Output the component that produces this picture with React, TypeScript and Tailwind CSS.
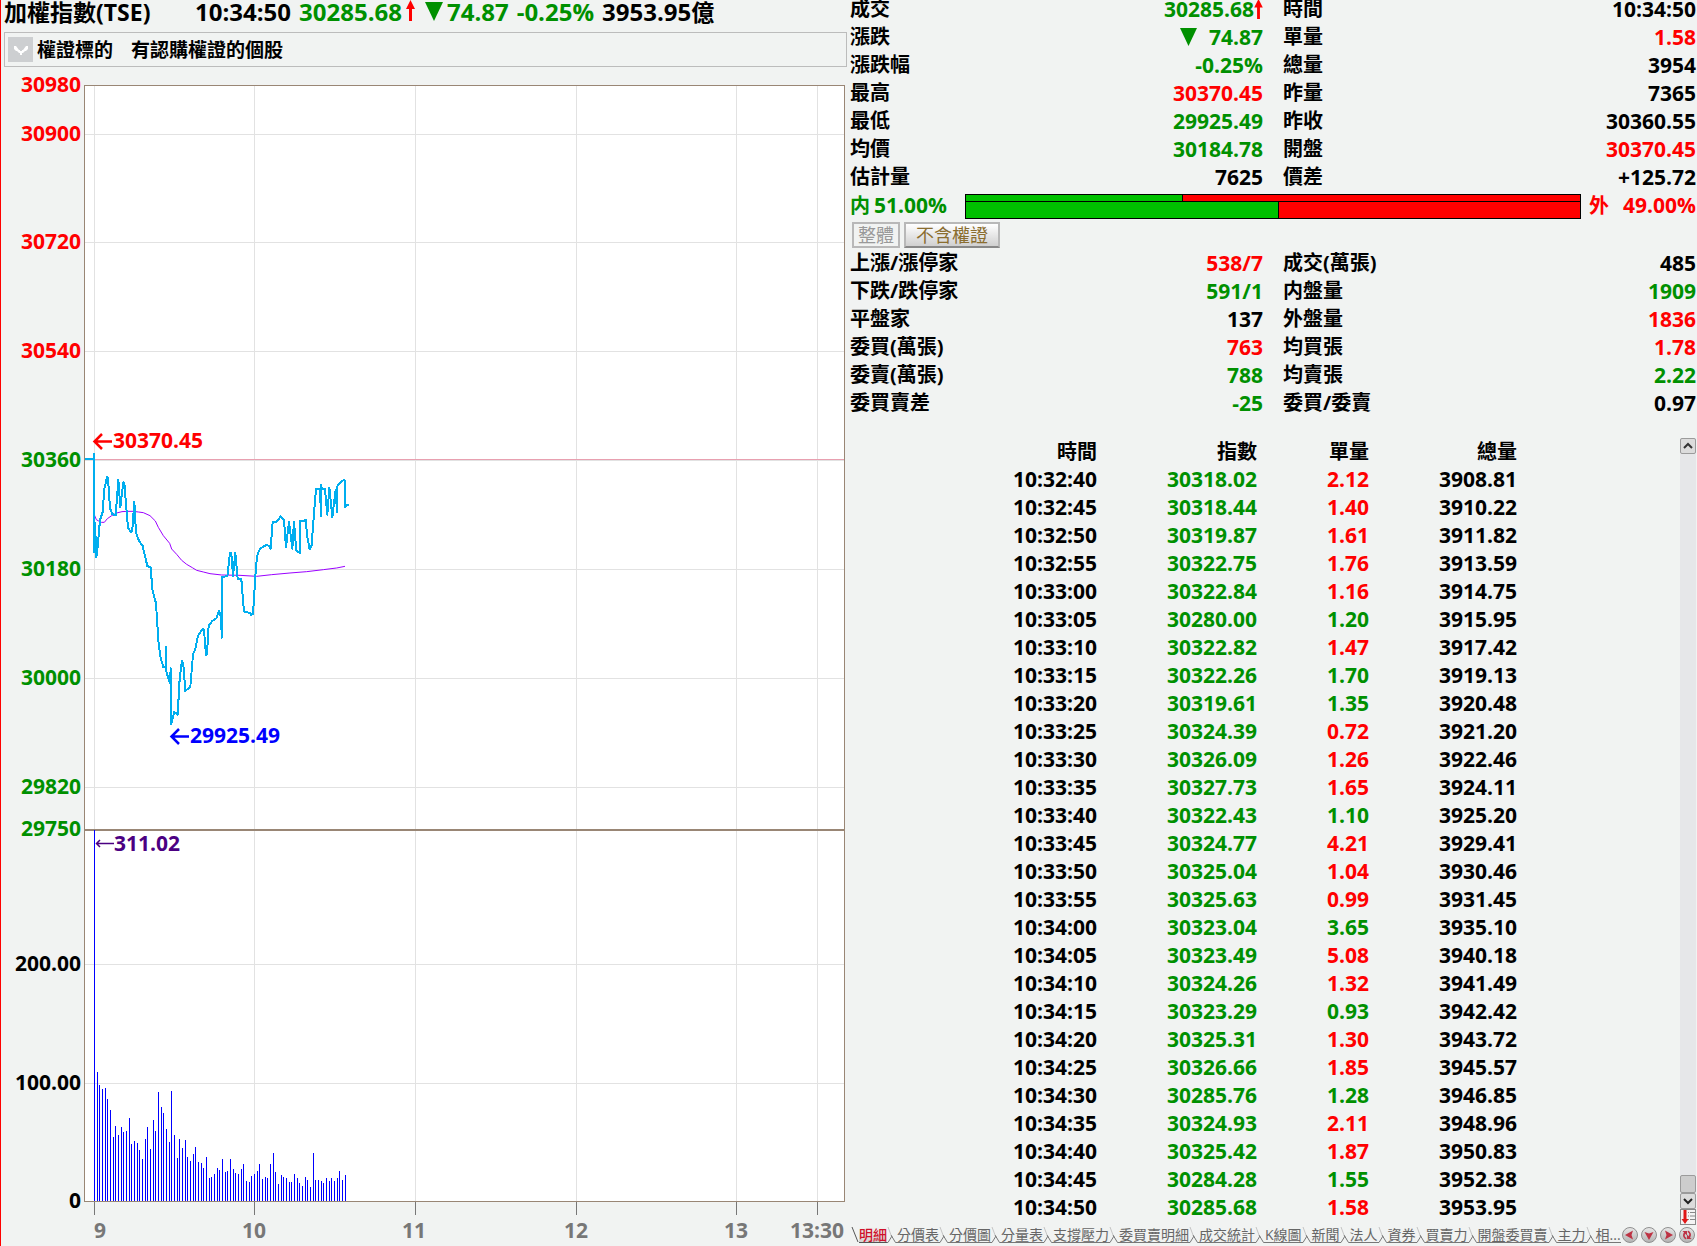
import React from "react";

type Tone = "red" | "green" | "black";

const toneClass: Record<Tone, string> = {
  red: "text-[#ff0000]",
  green: "text-[#009000]",
  black: "text-black",
};

type Stat = { label: string; value: string; tone: Tone; mark?: "up" | "down" };

const quoteStats: Stat[] = [
  { label: "成交", value: "30285.68", tone: "green", mark: "up" },
  { label: "時間", value: "10:34:50", tone: "black" },
  { label: "漲跌", value: "74.87", tone: "green", mark: "down" },
  { label: "單量", value: "1.58", tone: "red" },
  { label: "漲跌幅", value: "-0.25%", tone: "green" },
  { label: "總量", value: "3954", tone: "black" },
  { label: "最高", value: "30370.45", tone: "red" },
  { label: "昨量", value: "7365", tone: "black" },
  { label: "最低", value: "29925.49", tone: "green" },
  { label: "昨收", value: "30360.55", tone: "black" },
  { label: "均價", value: "30184.78", tone: "green" },
  { label: "開盤", value: "30370.45", tone: "red" },
  { label: "估計量", value: "7625", tone: "black" },
  { label: "價差", value: "+125.72", tone: "black" },
];

const marketStats: Stat[] = [
  { label: "上漲/漲停家", value: "538/7", tone: "red" },
  { label: "成交(萬張)", value: "485", tone: "black" },
  { label: "下跌/跌停家", value: "591/1", tone: "green" },
  { label: "内盤量", value: "1909", tone: "green" },
  { label: "平盤家", value: "137", tone: "black" },
  { label: "外盤量", value: "1836", tone: "red" },
  { label: "委買(萬張)", value: "763", tone: "red" },
  { label: "均買張", value: "1.78", tone: "red" },
  { label: "委賣(萬張)", value: "788", tone: "green" },
  { label: "均賣張", value: "2.22", tone: "green" },
  { label: "委買賣差", value: "-25", tone: "green" },
  { label: "委買/委賣", value: "0.97", tone: "black" },
];

// time, index, single volume, tone of the single volume, total volume
const ticks: [string, string, string, Tone, string][] = [
  ["10:32:40", "30318.02", "2.12", "red", "3908.81"],
  ["10:32:45", "30318.44", "1.40", "red", "3910.22"],
  ["10:32:50", "30319.87", "1.61", "red", "3911.82"],
  ["10:32:55", "30322.75", "1.76", "red", "3913.59"],
  ["10:33:00", "30322.84", "1.16", "red", "3914.75"],
  ["10:33:05", "30280.00", "1.20", "green", "3915.95"],
  ["10:33:10", "30322.82", "1.47", "red", "3917.42"],
  ["10:33:15", "30322.26", "1.70", "green", "3919.13"],
  ["10:33:20", "30319.61", "1.35", "green", "3920.48"],
  ["10:33:25", "30324.39", "0.72", "red", "3921.20"],
  ["10:33:30", "30326.09", "1.26", "red", "3922.46"],
  ["10:33:35", "30327.73", "1.65", "red", "3924.11"],
  ["10:33:40", "30322.43", "1.10", "green", "3925.20"],
  ["10:33:45", "30324.77", "4.21", "red", "3929.41"],
  ["10:33:50", "30325.04", "1.04", "red", "3930.46"],
  ["10:33:55", "30325.63", "0.99", "red", "3931.45"],
  ["10:34:00", "30323.04", "3.65", "green", "3935.10"],
  ["10:34:05", "30323.49", "5.08", "red", "3940.18"],
  ["10:34:10", "30324.26", "1.32", "red", "3941.49"],
  ["10:34:15", "30323.29", "0.93", "green", "3942.42"],
  ["10:34:20", "30325.31", "1.30", "red", "3943.72"],
  ["10:34:25", "30326.66", "1.85", "red", "3945.57"],
  ["10:34:30", "30285.76", "1.28", "green", "3946.85"],
  ["10:34:35", "30324.93", "2.11", "red", "3948.96"],
  ["10:34:40", "30325.42", "1.87", "red", "3950.83"],
  ["10:34:45", "30284.28", "1.55", "green", "3952.38"],
  ["10:34:50", "30285.68", "1.58", "red", "3953.95"],
];

const tabs = ["明細", "分價表", "分價圖", "分量表", "支撐壓力", "委買賣明細", "成交統計", "K線圖", "新聞", "法人", "資券", "買賣力", "開盤委買賣", "主力", "相..."];

// one bar per minute from 09:00
const volumes = [
  371, 129, 116, 112, 113, 102, 91, 64, 75, 66, 74, 69, 70, 83, 57, 60, 58, 51, 42, 62, 74, 52, 81, 70, 109, 94, 88, 72, 59, 110, 66, 43, 62, 53, 61, 44, 40, 47, 54, 39, 38, 33, 44, 23, 24, 27, 33, 31,
  42, 29, 30, 42, 32, 28, 27, 32, 37, 20, 19, 25, 27, 30, 37, 22, 24, 23, 37, 48, 29, 17, 26, 24, 23, 19, 19, 27, 23, 18, 15, 24, 21, 14, 48, 21, 21, 20, 18, 23, 20, 23, 20, 23, 30, 21, 26,
];

const priceLabels: [string, number, string][] = [
  ["30980", 85, "#ff0000"],
  ["30900", 134, "#ff0000"],
  ["30720", 242, "#ff0000"],
  ["30540", 351, "#ff0000"],
  ["30360", 460, "#009000"],
  ["30180", 569, "#009000"],
  ["30000", 678, "#009000"],
  ["29820", 787, "#009000"],
  ["29750", 829, "#009000"],
  ["200.00", 964, "#000000"],
  ["100.00", 1083, "#000000"],
  ["0", 1201, "#000000"],
];

const hourLabels: [string, number, number][] = [
  ["9", 94, 100],
  ["10", 254, 254],
  ["11", 415, 414],
  ["12", 576, 576],
  ["13", 736, 736],
  ["13:30", 817, 817],
];

const priceLine =
  "44,117 72,117 72,102 72,397 75,310 79,411 83,380 90,300 98,276 103,206 108,186 111,170 114,174 120,265 127,282 137,286 145,180 151,262 160,187 163,190 174,324 183,336 187,330 193,245 198,338 207,363 218,378 232,438 242,442 247,508 258,550 265,660 271,709 280,742 287,742 288,680 289,755 300,790 302,745 303,913 313,876 323,884 329,777 336,722 340,735 346,813 361,800 369,704 376,686 384,647 398,627 402,630 408,706 411,700 416,616 427,603 440,594 447,572 452,590 456,653 457,470 472,469 480,398 484,400 489,468 496,398 503,476 514,478 522,575 540,579 544,585 549,582 556,470 561,408 570,386 587,376 598,377 602,387 608,305 619,307 632,289 642,300 648,382 657,305 667,386 672,305 679,392 690,400 690,302 700,304 707,300 712,350 719,388 725,375 732,280 738,207 750,207 753,290 753,195 756,207 765,207 772,284 778,203 787,291 797,210 801,277 801,200 810,188 822,179 825,182 825,262 829,255 836,255";

const averageLine =
  "72,282 79,299 86,303 94,307 103,307 112,296 125,287 140,279 156,275 170,274 190,274 205,276 220,278 240,287 256,303 265,322 280,347 299,370 305,387 320,403 335,421 350,433 367,443 380,451 400,456 420,461 455,465 510,466 560,469 605,464 660,459 710,455 760,449 800,444 825,439";

function UpArrow({ className }: { className: string }) {
  return (
    <svg className={className} viewBox="0 0 9 21" aria-hidden>
      <path d="M4.500 0 9 9H6v12H3V9H0z" fill="#ff0000" />
    </svg>
  );
}

function DownTriangle({ className }: { className: string }) {
  return (
    <svg className={className} viewBox="0 0 18 19" aria-hidden>
      <path d="M0 0h18L9 19z" fill="#009000" />
    </svg>
  );
}

function TrendChart() {
  return (
    <svg className="block h-auto w-full" viewBox="0 0 846 1179" role="img" aria-label="加權指數走勢圖" fontSize="21" fontWeight="700">
      <g transform="translate(-1 -67)">
        <rect x="84.500" y="85.500" width="760" height="1116" fill="#fff" />
        <g stroke="#e2e2e2" shapeRendering="crispEdges">
          {hourLabels.map(([t, x]) => (
            <line key={t} x1={x + 0.5} x2={x + 0.5} y1="86" y2="1201" />
          ))}
          {[134, 242, 351, 460, 569, 678, 787, 964, 1083].map((y) => (
            <line key={y} x1="85" x2="844" y1={y + 0.5} y2={y + 0.5} />
          ))}
        </g>
        <line x1="85" x2="844" y1="459.500" y2="459.500" stroke="#e8a0b0" />
        <line x1="84" x2="845" y1="830" y2="830" stroke="#998675" strokeWidth="2" />
        <rect x="84.500" y="85.500" width="760" height="1116" fill="none" stroke="#998675" />

        <g stroke="#0000ff" shapeRendering="crispEdges">
          {volumes.map((v, i) => {
            const x = 94.5 + Math.round((i * 8) / 3);
            return <line key={i} x1={x} x2={x} y1={1201 - v} y2="1201" />;
          })}
        </g>
        <g transform="translate(70 420) scale(0.33333)" fill="none" strokeLinejoin="round" shapeRendering="crispEdges">
          <polyline points={averageLine} stroke="#9a00ff" strokeWidth="3" />
          <polyline points={priceLine} stroke="#00aeef" strokeWidth="6" />
        </g>

        <g textAnchor="end">
          {priceLabels.map(([t, y, c]) => (
            <text key={t} x="81" y={y + 7} fill={c}>
              {t}
            </text>
          ))}
        </g>
        <g textAnchor="middle" fill="#777777">
          {hourLabels.map(([t, x, lx]) => (
            <g key={t}>
              <line x1={x + 0.5} x2={x + 0.5} y1="1202" y2="1215" stroke="#777777" />
              <text x={lx} y="1238">
                {t}
              </text>
            </g>
          ))}
        </g>

        <path d="M102 434l-7.500 7.500 7.500 7.500M95 441.500h17" fill="none" stroke="#ff0000" strokeWidth="2.500" />
        <text x="113" y="448" fill="#ff0000">
          30370.45
        </text>
        <path d="M179 729l-7.500 7.500 7.500 7.500M172 736.500h17" fill="none" stroke="#0000ff" strokeWidth="2.500" />
        <text x="190" y="743" fill="#0000ff">
          29925.49
        </text>
        <path d="M100 840l-3.500 3.500 3.500 3.500M97 843.500h17" fill="none" stroke="#4b0082" strokeWidth="1.500" />
        <text x="114" y="851" fill="#4b0082">
          311.02
        </text>
      </g>
    </svg>
  );
}

function StatGrid({ stats }: { stats: Stat[] }) {
  return (
    <dl className="grid grid-cols-2 gap-x-5 text-[20px] leading-7">
      {stats.map((s) => (
        <div key={s.label} className="flex items-center justify-between whitespace-nowrap">
          <dt>{s.label}</dt>
          <dd className={`flex items-center text-[21px] ${toneClass[s.tone]}`}>
            {s.mark === "down" && <DownTriangle className="mr-3 h-[18px] w-[17px]" />}
            {s.value}
            {s.mark === "up" && <UpArrow className="h-5 w-[9px]" />}
          </dd>
        </div>
      ))}
    </dl>
  );
}

function RatioBar() {
  return (
    <div className="mt-px flex h-7 items-center gap-2 whitespace-nowrap text-[20px]">
      <div className="flex w-[107px] items-center gap-1 text-[#009000]">
        <span>内</span>
        <span className="text-[21px]">51.00%</span>
      </div>
      <div className="flex h-[25px] flex-1 flex-col border border-black">
        <div className="box-content flex h-1.5 border-b border-black">
          <div className="w-[35.4%] border-r border-black bg-[#00c000]" />
          <div className="flex-1 bg-[#ff0000]" />
        </div>
        <div className="flex flex-1">
          <div className="w-[51%] border-r border-black bg-[#00c000]" />
          <div className="flex-1 bg-[#ff0000]" />
        </div>
      </div>
      <div className="flex w-[107px] items-center justify-between text-[#ff0000]">
        <span>外</span>
        <span className="text-[21px]">49.00%</span>
      </div>
    </div>
  );
}

function TickTable() {
  return (
    <table className="w-full table-fixed self-start text-right text-[21px] leading-[26px]">
      <colgroup>
        <col className="w-[247px]" />
        <col className="w-[160px]" />
        <col className="w-[112px]" />
        <col className="w-[148px]" />
        <col />
      </colgroup>
      <thead className="text-[20px]">
        <tr className="h-7">
          <th className="p-0">時間</th>
          <th className="p-0">指數</th>
          <th className="p-0">單量</th>
          <th className="p-0">總量</th>
          <th className="p-0" />
        </tr>
      </thead>
      <tbody>
        {ticks.map(([time, index, single, tone, total]) => (
          <tr key={time} className="h-7">
            <td className="p-0 pb-0.5">{time}</td>
            <td className="p-0 pb-0.5 text-[#009000]">{index}</td>
            <td className={`p-0 pb-0.5 ${toneClass[tone]}`}>{single}</td>
            <td className="p-0 pb-0.5">{total}</td>
            <td className="p-0" />
          </tr>
        ))}
      </tbody>
    </table>
  );
}

function Scrollbar() {
  return (
    <div className="flex w-4 flex-col bg-[#e6e7e9]">
      <button aria-label="向上捲動" className="flex h-4 items-center justify-center rounded-[2px] border border-[#9b9b9b] bg-[#dcdcdc]">
        <svg className="size-3" viewBox="0 0 12 12" fill="none" stroke="#333" strokeWidth="2">
          <path d="M2 8l4-4 4 4" />
        </svg>
      </button>
      <div className="flex-1" />
      <div className="h-[18px] rounded-[2px] border border-[#9b9b9b] bg-[#cdcdcd]" />
      <button aria-label="向下捲動" className="flex h-4 items-center justify-center rounded-[2px] border border-[#9b9b9b] bg-[#dcdcdc]">
        <svg className="size-3" viewBox="0 0 12 12" fill="none" stroke="#222" strokeWidth="2">
          <path d="M2 4l4 4 4-4" />
        </svg>
      </button>
      <button aria-label="捲到最新" className="h-4 border border-[#8a8a8a] bg-[#f4f4f4]">
        <svg className="h-3.5 w-3.5" viewBox="0 0 14 14">
          <path d="M2.500 0h3v9H7.500L4 14 .5 9h2z" fill="#e01818" />
          <path d="M7 2.500h1M9 2.500h5M7 6h1M9 6h5M7 9.500h1M9 9.500h5" stroke="#888" />
        </svg>
      </button>
    </div>
  );
}

function TabEdge() {
  return (
    <svg className="h-4 w-2.5 shrink-0" viewBox="0 0 10 16" fill="none" aria-hidden>
      <path d="M1 0L4 8" stroke="#c4c4c4" />
      <path d="M4 8L8.500 15.500H10" stroke="#777" />
      <path d="M0 15.500H1L5 9" stroke="#777" />
    </svg>
  );
}

function RoundButton({ label, children }: { label: string; children: React.ReactNode }) {
  return (
    <button aria-label={label} className="flex size-4 items-center justify-center rounded-full border border-[#8f8f8f] bg-linear-to-b from-[#e6e6e6] to-[#b4b4b4]">
      <svg className="size-3 shrink-0" viewBox="0 0 12 12" fill="#bd3344">
        {children}
      </svg>
    </button>
  );
}

function BottomTabs() {
  return (
    <nav className="flex h-5 items-center justify-between pb-0.5 font-normal">
      <div className="flex h-4 whitespace-nowrap pl-px text-[14px] leading-4 text-[#666]">
        <svg className="h-4 w-2 shrink-0" viewBox="0 0 8 16" fill="none" aria-hidden>
          <path d="M1 0l6 15" stroke="#555" />
        </svg>
        {tabs.map((t, i) => (
          <React.Fragment key={t}>
            {i > 0 && <TabEdge />}
            <button className={i === 0 ? "border-b border-[#555] bg-linear-to-b from-[#f1f3f2] to-[#d4d4d4] font-medium text-[#d0102a]" : "border-b border-[#777]"}>{t}</button>
          </React.Fragment>
        ))}
      </div>
      <div className="flex gap-[3px] pr-0.5">
        <RoundButton label="上一頁">
          <path d="M1 6l8-4.500L7.500 6 9 10.500z" />
        </RoundButton>
        <RoundButton label="選單">
          <path d="M6 11L1.500 3 6 4.500 10.500 3z" />
        </RoundButton>
        <RoundButton label="下一頁">
          <path d="M11 6L3 1.500 4.500 6 3 10.500z" />
        </RoundButton>
        <RoundButton label="切換">
          <path d="M5 10.500A4.500 4.500 0 0 1 3 3.500L1.500 2H6v4.500L4.300 4.800A3 3 0 0 0 5.500 9zM7 1.500a4.500 4.500 0 0 1 2 7l1.500 1.500H6V5.500l1.700 1.700A3 3 0 0 0 6.500 3z" />
        </RoundButton>
      </div>
    </nav>
  );
}

export default function App() {
  return (
    <div className="grid min-h-screen grid-cols-[847fr_850fr] bg-[#f1f3f2] font-['Open_Sans','Noto_Sans_CJK_TC',sans-serif] font-bold text-black">
      <section className="border-l border-[#ff0000]">
        <header className="flex h-8 items-start whitespace-nowrap pl-[3px] text-[24px] leading-6">
          <h1 className="w-[191px] text-[23px]">加權指數(TSE)</h1>
          <span>10:34:50</span>
          <span className="ml-2 text-[#009000]">30285.68</span>
          <UpArrow className="ml-1 h-[21px] w-[9px]" />
          <DownTriangle className="mt-0.5 ml-2.5 h-[19px] w-[18px]" />
          <span className="ml-1 text-[#009000]">74.87</span>
          <span className="ml-2 text-[#009000]">-0.25%</span>
          <span className="ml-2">
            3953.95<span className="text-[23px]">億</span>
          </span>
        </header>
        <div className="ml-[3px] flex h-[35px] items-center border border-[#bcbcbc] pl-[3px] text-[19px] leading-6">
          <button aria-label="展開" className="flex size-[25px] items-center justify-center bg-[#cdcfd1]">
            <svg className="size-4" viewBox="0 0 16 16" fill="#fff">
              <path d="M1 4h2l3 4h1v1h2V8h1l3-4h2v3l-2 2h-1l-2 2H9v2H7v-2H6L4 9H3L1 7z" />
            </svg>
          </button>
          <span className="ml-1">權證標的</span>
          <span className="ml-[18px]">有認購權證的個股</span>
        </div>
        <TrendChart />
      </section>

      <section className="flex flex-col pl-[3px]">
        <div className="-mt-[5px] pr-px">
          <StatGrid stats={quoteStats} />
          <RatioBar />
          <div className="flex gap-1 pt-0.5 pb-px pl-0.5 text-[18px] leading-5 font-normal">
            <button className="h-[26px] w-12 border-2 border-[#b8b8b8] text-[#999]">整體</button>
            <button className="h-[26px] w-24 border-2 border-[#b8b8b8] border-b-[#888] bg-linear-to-b from-white to-[#d0d0d0] text-[#8a6d2f]">不含權證</button>
          </div>
          <StatGrid stats={marketStats} />
        </div>
        <div className="mt-[21px] flex flex-1 pr-px pb-px">
          <TickTable />
          <Scrollbar />
        </div>
        <BottomTabs />
      </section>
    </div>
  );
}
